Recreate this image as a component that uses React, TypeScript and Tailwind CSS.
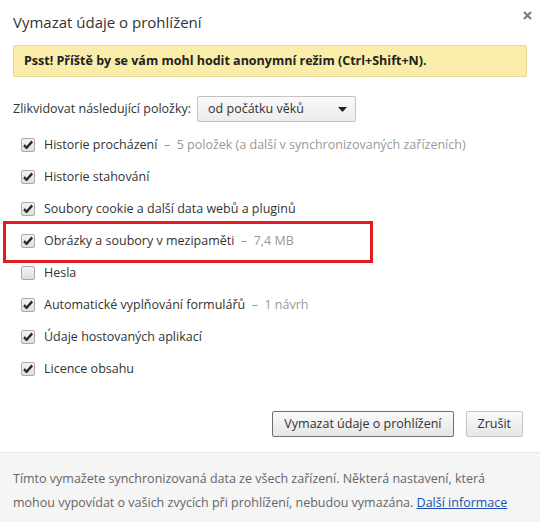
import React from "react";

const items = [
  { label: "Historie procházení", extra: "5 položek (a další v synchronizovaných zařízeních)", checked: true },
  { label: "Historie stahování", checked: true },
  { label: "Soubory cookie a další data webů a pluginů", checked: true },
  { label: "Obrázky a soubory v mezipaměti", extra: "7,4 MB", checked: true },
  { label: "Hesla", checked: false },
  { label: "Automatické vyplňování formulářů", extra: "1 návrh", checked: true },
  { label: "Údaje hostovaných aplikací", checked: true },
  { label: "Licence obsahu", checked: true },
];

function Checkbox({ checked }: { checked: boolean }) {
  return (
    <span className="w-[14px] h-[14px] rounded-[2px] border border-[#a9a9a9] bg-gradient-to-b from-[#f4f4f4] to-[#dedede] flex items-center justify-center shrink-0">
      {checked && (
        <svg width="12" height="12" viewBox="0 0 12 12">
          <path d="M2 6.2 L4.6 8.8 L10.2 2.4" fill="none" stroke="#2b2b2b" strokeWidth="2.4" strokeLinejoin="round" />
        </svg>
      )}
    </span>
  );
}

export default function App() {
  return (
    <div className="w-[545px] h-[532px] bg-white relative text-[#333] font-['Open_Sans',sans-serif]">
      <div className="w-[540px]">
        {/* Header */}
        <div className="flex items-start justify-between pl-[13px] pr-[8px] pt-[9px]">
          <h1 className="text-[15px] leading-[26px] text-[#333]">Vymazat údaje o prohlížení</h1>
          <svg width="9" height="9" viewBox="0 0 9 9" className="mt-[2px]">
            <path d="M1 1 L8 8 M8 1 L1 8" stroke="#7a7a7a" strokeWidth="2" />
          </svg>
        </div>

        {/* Notice */}
        <div className="mx-[13px] mt-[10px] h-[32px] flex items-center px-[10px] bg-[#f9eda9] border border-[#e9d994] rounded-[2px] text-[12.5px] font-bold text-[#222]">
          Psst! Příště by se vám mohl hodit anonymní režim (Ctrl+Shift+N).
        </div>

        {/* Time range */}
        <div className="flex items-center mt-[19px] pl-[13px] gap-[6px] text-[12.5px]">
          <span>Zlikvidovat následující položky:</span>
          <div className="w-[159px] h-[26px] border border-[#c3c3c3] rounded-[2px] bg-gradient-to-b from-[#fafafa] to-[#ececec] flex items-center justify-between pl-[10px] pr-[8px]">
            <span>od počátku věků</span>
            <svg width="9" height="5" viewBox="0 0 9 5">
              <path d="M0 0 H9 L4.5 5 Z" fill="#222" />
            </svg>
          </div>
        </div>

        {/* Items */}
        <div className="mt-[7px] flex flex-col">
          {items.map((it, i) => (
            <div key={i} className="h-[32px] flex items-center pl-[21px] gap-[9px] text-[12.5px]">
              <Checkbox checked={it.checked} />
              <span className="whitespace-nowrap">
                {it.label}
                {it.extra && <span className="text-[#999]">&nbsp; –&nbsp; {it.extra}</span>}
              </span>
            </div>
          ))}
        </div>

        {/* Buttons */}
        <div className="flex justify-end gap-[12px] pr-[17px] mt-[26px] text-[12.5px]">
          <button className="h-[26px] px-[11px] border border-[#6f6f6f] rounded-[2px] bg-gradient-to-b from-[#fafafa] to-[#e6e6e6] text-[#333]">
            Vymazat údaje o prohlížení
          </button>
          <button className="h-[26px] px-[11px] border border-[#c3c3c3] rounded-[2px] bg-gradient-to-b from-[#fafafa] to-[#e6e6e6] text-[#333]">
            Zrušit
          </button>
        </div>

        {/* Footer */}
        <div className="mt-[15px] h-[70px] bg-[#f5f5f5] border-t border-[#e8e8e8] px-[13px] pt-[14px] text-[12.5px] leading-[24px] text-[#666]">
          Tímto vymažete synchronizovaná data ze všech zařízení. Některá nastavení, která mohou vypovídat o vašich zvycích při prohlížení, nebudou vymazána.{" "}
          <a className="text-[#1b4fb5] underline">Další informace</a>
        </div>
      </div>

      {/* Highlight */}
      <div className="absolute left-[3px] top-[221px] w-[370px] h-[42px] border-[3px] border-[#e11b24]" />
    </div>
  );
}
